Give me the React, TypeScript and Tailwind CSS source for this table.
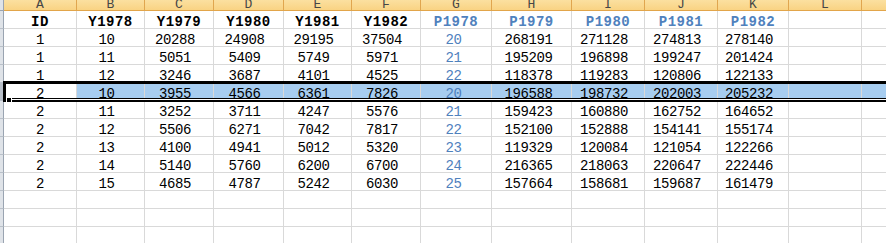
const cols = [
  { key: "A", w: "w-[73px]", pr: "" },
  { key: "B", w: "w-[68px]", pr: "pr-[8px]" },
  { key: "C", w: "w-[69px]", pr: "pr-[8px]" },
  { key: "D", w: "w-[70px]", pr: "pr-[8px]" },
  { key: "E", w: "w-[68px]", pr: "pr-[8px]" },
  { key: "F", w: "w-[69px]", pr: "pr-[8px]" },
  { key: "G", w: "w-[71px]", pr: "pr-[5px]" },
  { key: "H", w: "w-[80px]", pr: "pr-[6px]" },
  { key: "I", w: "w-[73px]", pr: "pr-[8px]" },
  { key: "J", w: "w-[73px]", pr: "pr-[8px]" },
  { key: "K", w: "w-[71px]", pr: "pr-[8px]" },
  { key: "L", w: "w-[73px]", pr: "" },
];

const headers = ["ID", "Y1978", "Y1979", "Y1980", "Y1981", "Y1982", "P1978", "P1979", "P1980", "P1981", "P1982"];

const rows = [
  ["1", "10", "20288", "24908", "29195", "37504", "20", "268191", "271128", "274813", "278140"],
  ["1", "11", "5051", "5409", "5749", "5971", "21", "195209", "196898", "199247", "201424"],
  ["1", "12", "3246", "3687", "4101", "4525", "22", "118378", "119283", "120806", "122133"],
  ["2", "10", "3955", "4566", "6361", "7826", "20", "196588", "198732", "202003", "205232"],
  ["2", "11", "3252", "3711", "4247", "5576", "21", "159423", "160880", "162752", "164652"],
  ["2", "12", "5506", "6271", "7042", "7817", "22", "152100", "152888", "154141", "155174"],
  ["2", "13", "4100", "4941", "5012", "5320", "23", "119329", "120084", "121054", "122266"],
  ["2", "14", "5140", "5760", "6200", "6700", "24", "216365", "218063", "220647", "222446"],
  ["2", "15", "4685", "4787", "5242", "6030", "25", "157664", "158681", "159687", "161479"],
  [],
  [],
  [],
];

const SELECTED = 3;
const font = "font-['Liberation_Mono',monospace]";

function RowHead({ selected }: { selected?: boolean }) {
  return (
    <div
      className={`w-[4px] shrink-0 border-r border-b border-r-[#9aa4b1] border-b-[#b9c0c9] ${
        selected ? "bg-[#b7bec8]" : "bg-[#dfe3e8]"
      }`}
    />
  );
}

export default function App() {
  return (
    <div className={`relative w-[886px] h-[243px] overflow-hidden bg-white ${font}`}>
      {/* column letters */}
      <div className="flex h-[11px]">
        <div className="w-[4px] shrink-0 bg-[#dfe3e8] border-r border-b border-[#9aa4b1]" />
        {cols.map((c) => (
          <div
            key={c.key}
            className={`${c.w} shrink-0 flex items-end justify-center overflow-hidden border-r border-b border-r-[#e0a64f] border-b-[#e2a54a] bg-gradient-to-b from-[#fbe0a0] to-[#f9d383] text-[13px] leading-[11px] text-[#464646]`}
          >
            {c.key}
          </div>
        ))}
        <div className="flex-1 border-b border-[#e2a54a] bg-gradient-to-b from-[#fbe0a0] to-[#f9d383]" />
      </div>

      {/* field names */}
      <div className="flex h-[18px]">
        <RowHead />
        {cols.map((c, i) => (
          <div
            key={c.key}
            className={`${c.w} shrink-0 flex items-end justify-center border-r border-b border-[#d9d9d9] text-[14px] leading-[11px] font-bold tracking-[0.5px] ${
              i >= 6 ? "text-[#4f81bd]" : "text-black"
            }`}
          >
            {headers[i] ?? ""}
          </div>
        ))}
        <div className="flex-1 border-b border-[#d9d9d9]" />
      </div>

      {rows.map((r, ri) => {
        const sel = ri === SELECTED;
        return (
          <div key={ri} className="flex h-[18px]">
            <RowHead selected={sel} />
            {cols.map((c, i) => (
              <div
                key={c.key}
                className={`${c.w} ${c.pr} shrink-0 flex items-end justify-center border-r border-b border-[#d9d9d9] text-[14px] leading-[11px] tracking-[-0.4px] ${
                  i === 6 ? "text-[#4f81bd]" : "text-black"
                } ${sel && i > 0 ? "bg-[#a7cdf0]" : ""}`}
              >
                {r[i] ?? ""}
              </div>
            ))}
            <div className={`flex-1 border-b border-[#d9d9d9] ${sel ? "bg-[#a7cdf0]" : ""}`} />
          </div>
        );
      })}

      {/* row selection frame */}
      <div className="absolute left-[3px] right-[-4px] top-[81px] h-[21px] border-t-[3px] border-l-[3px] border-black">
        <div className="absolute left-0 right-0 bottom-0 h-[4px] border-t border-b-2 border-black bg-white" />
        <div className="absolute left-[0px] bottom-[-1px] w-[6px] h-[6px] bg-black border border-white" />
      </div>
    </div>
  );
}
